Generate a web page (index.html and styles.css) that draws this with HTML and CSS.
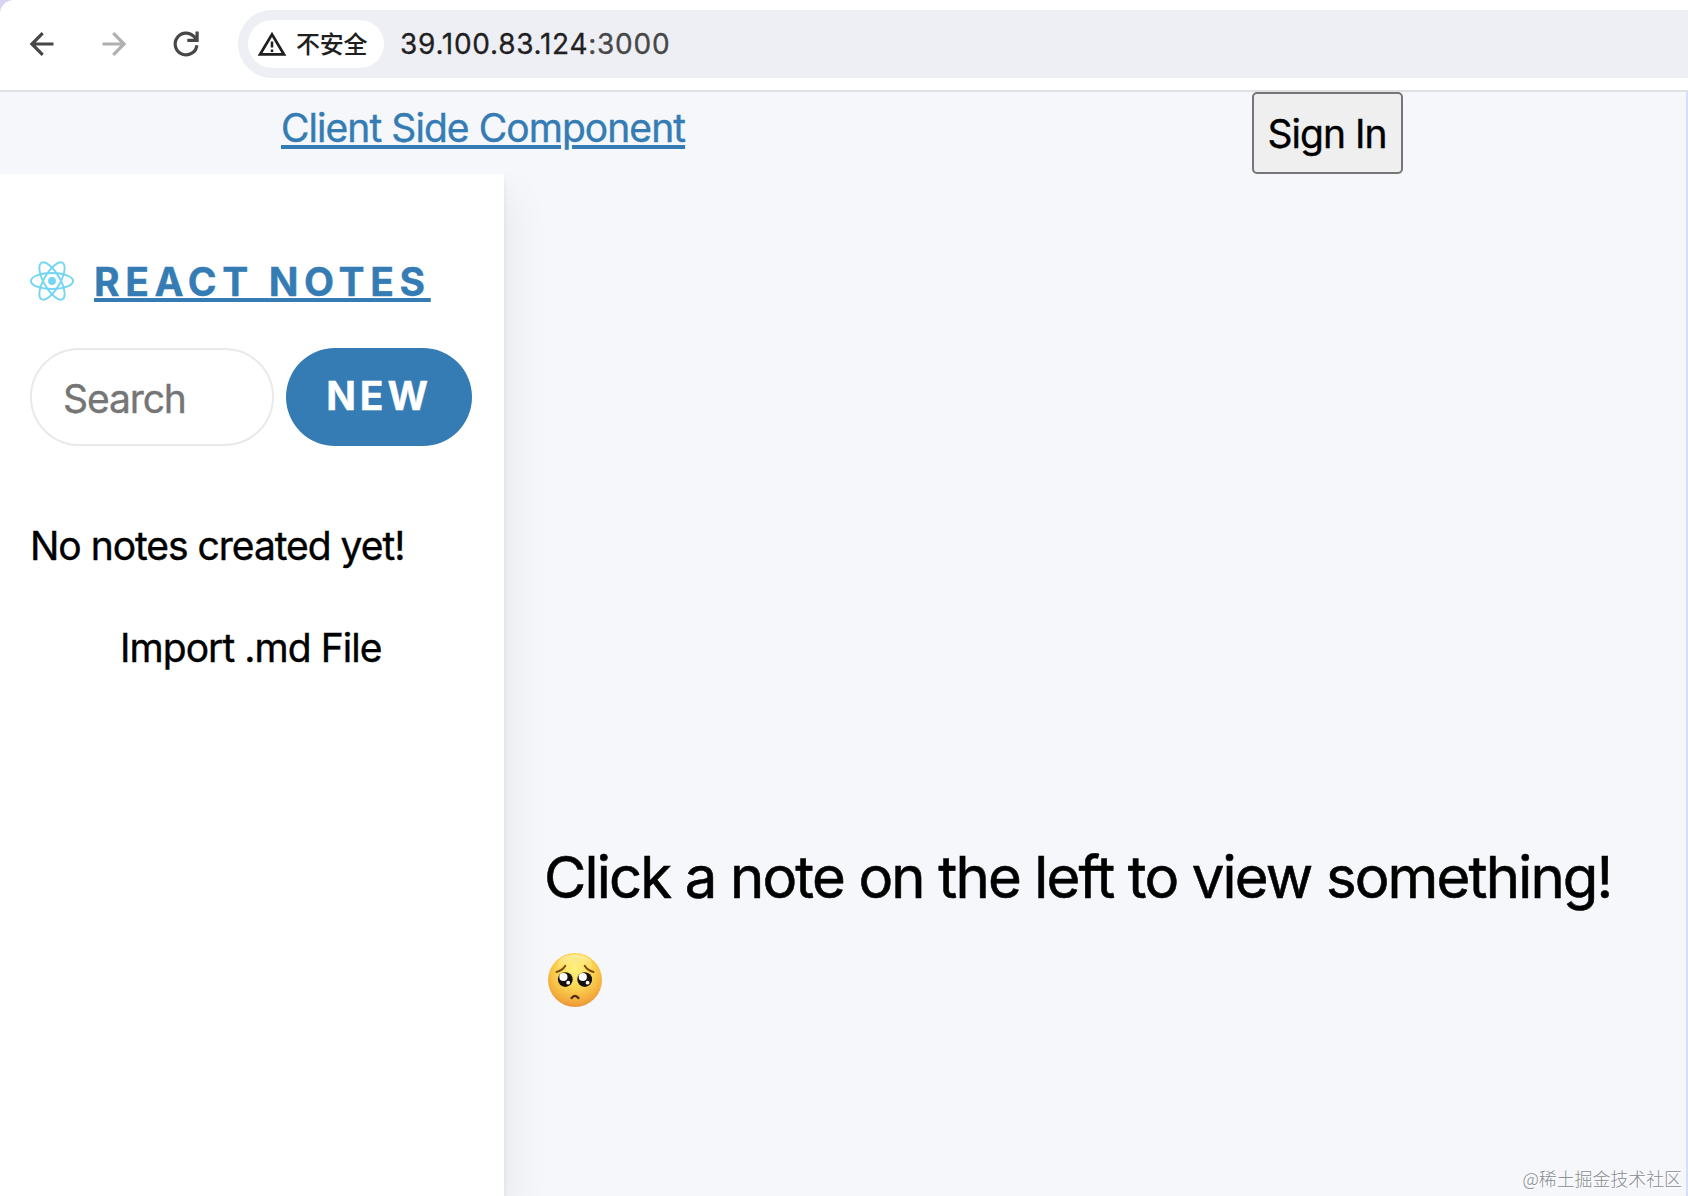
FILE: index.html
```html
<!DOCTYPE html>
<html lang="zh-CN">
<head>
<meta charset="utf-8">
<title>React Notes</title>
<link rel="stylesheet" href="styles.css">
</head>
<body>
<div class="toolbar">
  <svg class="nav-icon" viewBox="0 0 24 24"><path d="M23.5 12H2M12.7 1.2 1.9 12l10.8 10.8"/></svg>
  <svg class="nav-icon nav-icon-off" viewBox="0 0 24 24"><path d="M.5 12H22M11.3 1.2 22.1 12 11.3 22.8"/></svg>
  <svg class="nav-icon reload" viewBox="0 0 26 26"><path d="M23.9 14.2A10.9 10.9 0 1 1 20.9 5.4L23 7.6"/><path d="M24.1.4v8.9h-9.8"/></svg>
  <div class="omnibox">
    <div class="chip">
      <svg class="warn" viewBox="0 0 30 26"><path d="M15 3.4 3.1 23.4h23.8z"/><path class="mark" d="M15 10.5v6M15 18.5v2.4"/></svg>
      <span class="chip-text">不安全</span>
    </div>
    <span class="url">39.100.83.124<span class="port">:3000</span></span>
  </div>
</div>
<div class="page">
  <header class="header">
    <a class="client-link">Client Side Component</a>
    <button class="sign-in">Sign In</button>
  </header>
  <div class="main">
    <aside class="sidebar">
      <div class="brand">
        <svg class="logo" viewBox="-11.5 -10.23 23 20.46"><circle r="2.05" fill="#74d5f5"/><g fill="none" stroke="#74d5f5"><ellipse rx="11" ry="4.2"/><ellipse rx="11" ry="4.2" transform="rotate(60)"/><ellipse rx="11" ry="4.2" transform="rotate(120)"/></g></svg>
        <a class="brand-name">REACT NOTES</a>
      </div>
      <div class="menu">
        <input class="search" placeholder="Search">
        <button class="new">NEW</button>
      </div>
      <div class="empty">No notes created yet!</div>
      <div class="import">Import .md File</div>
    </aside>
    <section class="viewer">
      <div class="hint">Click a note on the left to view something!</div>
      <svg class="face" viewBox="0 0 54 54">
        <defs>
          <radialGradient id="skin" cx=".5" cy=".32" r=".68"><stop offset="0" stop-color="#fff27a"/><stop offset=".5" stop-color="#fbd251"/><stop offset=".85" stop-color="#f3ab3c"/><stop offset="1" stop-color="#e9953a"/></radialGradient>
          <linearGradient id="shine" x2="0" y2="1"><stop offset="0" stop-color="#fffbd0" stop-opacity=".6"/><stop offset="1" stop-color="#fff27a" stop-opacity="0"/></linearGradient>
        </defs>
        <circle cx="27" cy="27" r="27" fill="url(#skin)"/>
        <ellipse cx="27" cy="11" rx="17" ry="9.5" fill="url(#shine)"/>
        <g fill="none" stroke="#7b4a12" stroke-width="2" stroke-linecap="round"><path d="M8.5 19q6-1.5 8.8-6.2M45.5 19q-6-1.5-8.8-6.2"/></g>
        <g fill="#17110d"><circle cx="17.3" cy="26.6" r="7.4"/><circle cx="36.7" cy="26.6" r="7.4"/></g>
        <g fill="#fff"><circle cx="15.4" cy="24" r="4.1"/><circle cx="34.8" cy="24" r="4.1"/><circle cx="20.2" cy="29.7" r="1.9"/><circle cx="39.6" cy="29.7" r="1.9"/></g>
        <path d="M23.6 45q3.4-4.2 6.8 0" fill="none" stroke="#4f2a10" stroke-width="2.3" stroke-linecap="round"/>
      </svg>
    </section>
  </div>
  <div class="watermark">@稀土掘金技术社区</div>
</div>
</body>
</html>
```
FILE: styles.css
```css
* { box-sizing: border-box; }

body {
  margin: 0;
  height: 1196px;
  overflow: hidden;
  display: flex;
  flex-direction: column;
  background: #d9d2f5;
  color: #000;
  font: 39px/60px Inter, "Noto Sans CJK SC", sans-serif;
  letter-spacing: -0.98px;
  white-space: nowrap;
}

/* Browser toolbar */
.toolbar {
  display: flex;
  align-items: center;
  flex: none;
  height: 92px;
  padding: 0 0 2px 30px;
  background: #fff;
  border-bottom: 2px solid #dfe1e4;
  border-top-left-radius: 14px;
}
.nav-icon {
  width: 24px;
  height: 24px;
  margin-right: 48px;
  overflow: visible;
  fill: none;
  stroke: #474747;
  stroke-width: 3.2;
}
.nav-icon-off { stroke: #b0b0b0; }
.reload { width: 26px; height: 26px; margin-right: 39px; margin-left: -1px; }
.omnibox {
  flex: 1;
  display: flex;
  align-items: center;
  height: 68px;
  padding-left: 10px;
  background: #edeff5;
  border-radius: 34px 0 0 34px;
}
.chip {
  display: flex;
  align-items: center;
  width: 136px;
  height: 48px;
  padding-left: 9px;
  border-radius: 24px;
  background: #fff;
  color: #1f1f1f;
  font: 500 24px/48px "Noto Sans CJK SC", sans-serif;
  letter-spacing: -0.3px;
}
.chip-text { padding-bottom: 2px; }
.warn {
  width: 30px;
  height: 26px;
  margin-right: 9px;
  fill: none;
  stroke: #1f1f1f;
  stroke-width: 2.8;
}
.mark { stroke-width: 2.5; }
.url {
  margin-left: 16px;
  font-size: 28px;
  letter-spacing: 0.73px;
  color: #1f1f1f;
  -webkit-text-stroke: 0.3px;
}
.port { color: #474747; }

/* Page */
.page {
  position: relative;
  flex: 1;
  display: flex;
  flex-direction: column;
  background: #f5f7fb;
  border-right: 2px solid #d3e0fb;
  -webkit-text-stroke: 0.4px;
}
.header {
  display: flex;
  justify-content: space-between;
  align-items: flex-start;
  height: 82px;
  padding: 0 283px 0 281px;
}
.client-link,
.brand-name {
  color: #347cb3;
  text-decoration: underline;
  text-decoration-thickness: 4px;
  text-underline-offset: 3px;
}
.client-link { padding-top: 6px; letter-spacing: -0.94px; }
.sign-in {
  width: 151px;
  height: 82px;
  padding: 1px 1px 0 0;
  border: 2px solid #767676;
  border-radius: 5px;
  background: #efefef;
  font: inherit;
  letter-spacing: inherit;
  color: #000;
}
.main { flex: 1; display: flex; }
.sidebar {
  width: 504px;
  padding: 78px 30px 0;
  background: #fff;
  box-shadow: 0 20px 44px rgba(0, 0, 0, .09), 0 5px 5px rgba(0, 0, 0, .07);
  clip-path: inset(0 -80px 0 0);
}
.brand { display: flex; align-items: center; height: 60px; }
.logo { width: 44px; height: 42px; margin: 0 20px 2px 0; }
.brand-name {
  font-weight: 700;
  letter-spacing: 5.64px;
  text-underline-offset: 2px;
  text-decoration-skip-ink: none;
}
.menu { display: flex; gap: 12px; margin: 36px 0 70px; }
.search {
  width: 244px;
  height: 98px;
  padding: 3px 31px 0;
  border: 2px solid #e9e9e9;
  border-radius: 49px;
  outline: 0;
  font: inherit;
  letter-spacing: -1.1px;
}
.search::placeholder { color: #757575; }
.new {
  width: 186px;
  height: 98px;
  padding: 0 0 3px;
  border: 0;
  border-radius: 49px;
  background: #347cb3;
  color: #fff;
  font: inherit;
  font-weight: 700;
  letter-spacing: 3.9px;
}
.empty { letter-spacing: -1.03px; }
.import { margin: 42px 0 0 90px; letter-spacing: -0.95px; }
.viewer { padding: 658px 0 0 40px; }
.hint { font-size: 58px; line-height: 90px; letter-spacing: -1.83px; -webkit-text-stroke: 0.6px; }
.face { display: block; width: 54px; height: 54px; margin: 31px 0 0 4px; }

.watermark {
  position: absolute;
  right: 4px;
  bottom: 5px;
  font: 300 18px/26px "Noto Sans CJK SC", sans-serif;
  letter-spacing: -0.1px;
  color: #8b8c8f;
  text-shadow: 1px 1px 0 #fff;
  -webkit-text-stroke: 0;
}
```
